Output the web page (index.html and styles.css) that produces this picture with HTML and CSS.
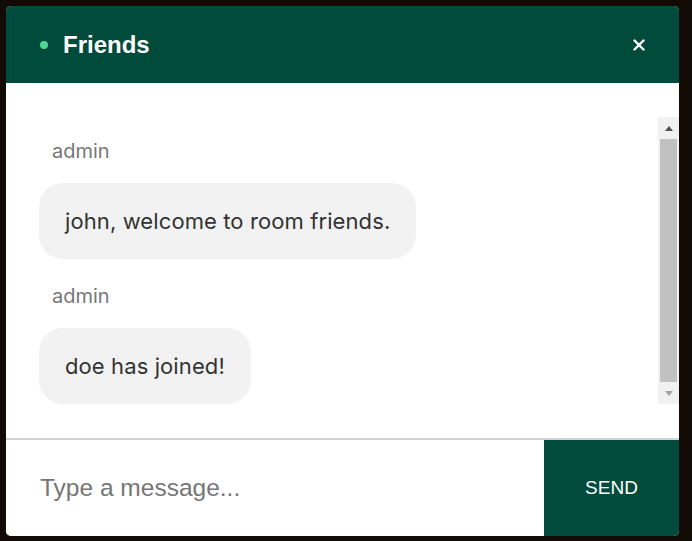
FILE: index.html
```html
<!DOCTYPE html>
<html lang="en">
<head>
<meta charset="utf-8">
<title>Friends</title>
<link rel="stylesheet" href="styles.css">
</head>
<body>
<div class="chat">
  <header class="chat-header">
    <div class="title">
      <span class="dot"></span>
      <span class="room">Friends</span>
    </div>
    <button class="close" aria-label="Close">
      <svg width="12" height="12" viewBox="0 0 12 12"><path d="M1.5 1.5 L10.5 10.5 M10.5 1.5 L1.5 10.5" stroke="#fff" stroke-width="2.4" stroke-linecap="round"/></svg>
    </button>
  </header>
  <section class="messages">
    <div class="pane">
      <div class="scroller">
        <div class="list">
          <div class="msg">
            <div class="author">admin</div>
            <div class="bubble">john, welcome to room friends.</div>
          </div>
          <div class="msg">
            <div class="author">admin</div>
            <div class="bubble">doe has joined!</div>
          </div>
        </div>
      </div>
      <div class="scrollbar" aria-hidden="true">
        <div class="sb-btn sb-up"><span class="arrow-up"></span></div>
        <div class="sb-track"><div class="sb-thumb"></div></div>
        <div class="sb-btn sb-down"><span class="arrow-down"></span></div>
      </div>
    </div>
  </section>
  <form class="composer">
    <input class="input" type="text" placeholder="Type a message...">
    <button class="send" type="button">SEND</button>
  </form>
</div>
</body>
</html>
```

FILE: styles.css
```css
* { box-sizing: border-box; }
html, body { margin: 0; height: 100%; }
body {
  background: #120a05;
  padding: 6px;
  font-family: Inter, "Liberation Sans", Arial, sans-serif;
}
.chat {
  width: 673px;
  height: 530px;
  background: #fff;
  border-radius: 5px;
  overflow: hidden;
  display: flex;
  flex-direction: column;
}
.chat-header {
  height: 77px;
  flex: none;
  background: #004b3b;
  display: flex;
  align-items: center;
  justify-content: space-between;
  padding: 0 34px 0 34px;
}
.title { display: flex; align-items: center; gap: 15px; }
.dot {
  width: 8px; height: 8px; border-radius: 50%;
  background: #4fd98f;
}
.room {
  color: #fff;
  font-family: "Liberation Sans", Arial, sans-serif;
  font-weight: 700;
  font-size: 24px;
}
.close {
  background: none; border: 0; padding: 0; cursor: pointer;
  width: 12px; height: 12px; display: flex;
}
.messages {
  flex: none;
  height: 355px;
  padding: 34px 0 34px 33px;
}
.pane {
  height: 287px;
  display: flex;
}
.scroller {
  flex: 1;
  overflow: hidden;
  display: flex;
  flex-direction: column-reverse;
}
.scrollbar {
  width: 21px;
  flex: none;
  background: #f1f1f1;
  display: flex;
  flex-direction: column;
}
.sb-btn {
  height: 22px;
  flex: none;
  display: flex;
  align-items: center;
  justify-content: center;
}
.arrow-up {
  width: 0; height: 0;
  border-left: 4.5px solid transparent;
  border-right: 4.5px solid transparent;
  border-bottom: 5px solid #505050;
}
.arrow-down {
  width: 0; height: 0;
  border-left: 4.5px solid transparent;
  border-right: 4.5px solid transparent;
  border-top: 5px solid #a3a3a3;
}
.sb-track {
  flex: 1;
  display: flex;
  flex-direction: column;
  padding: 0 2px;
}
.sb-thumb {
  flex: 1;
  background: #c1c1c1;
  margin: 0 0 0;
}
.list { display: flex; flex-direction: column; align-items: flex-start; flex: none; }
.msg { margin-top: 26px; display: flex; flex-direction: column; align-items: flex-start; }
.author {
  padding-left: 13px;
  font-size: 20px;
  line-height: 22px;
  color: #777;
  margin-bottom: 21px;
}
.bubble {
  background: #f2f2f2;
  border-radius: 24px;
  padding: 26px 26px;
  font-size: 22px;
  line-height: 24px;
  letter-spacing: 0.1px;
  color: #333;
}
.composer {
  flex: 1;
  margin: 0;
  display: flex;
  border-top: 2px solid #d3d3d3;
}
.input {
  flex: 1;
  border: 0;
  outline: none;
  padding: 0 34px;
  font-family: "Liberation Sans", Arial, sans-serif;
  font-size: 24.5px;
  color: #333;
  background: #fff;
}
.input::placeholder { color: #767676; }
.send {
  width: 135px;
  border: 0;
  background: #004b3b;
  color: #fff;
  font-family: "Liberation Sans", Arial, sans-serif;
  font-size: 19px;
  cursor: pointer;
}
```
